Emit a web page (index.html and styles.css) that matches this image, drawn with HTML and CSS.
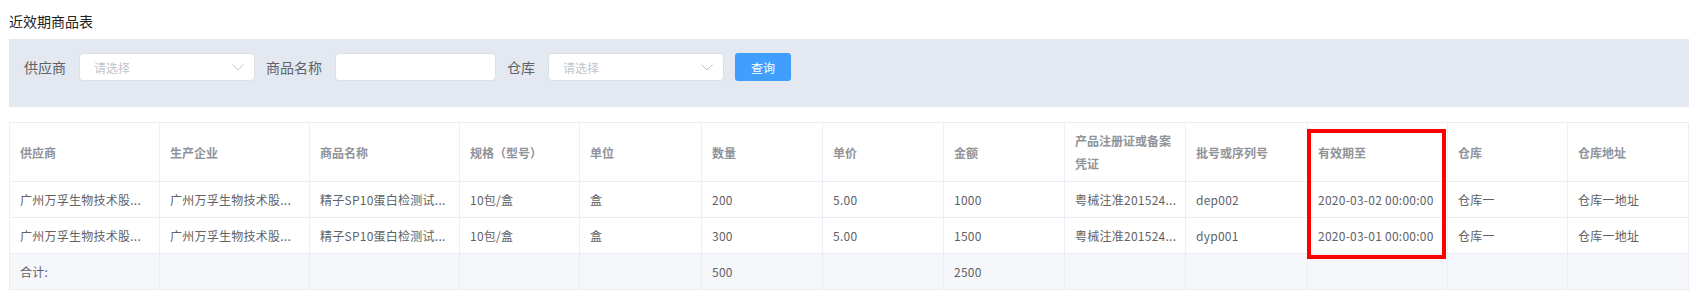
FILE: index.html
```html
<!DOCTYPE html>
<html lang="zh-CN">
<head>
<meta charset="utf-8">
<title>近效期商品表</title>
<link rel="stylesheet" href="styles.css">
</head>
<body>
<div class="page">
  <div class="title">近效期商品表</div>

  <form class="filter">
    <div class="form-item">
      <label class="form-label">供应商</label>
      <div class="select">
        <span class="placeholder">请选择</span>
        <svg class="arrow" width="12" height="7" viewBox="0 0 12 7"><polyline points="0.5,0.5 6,6 11.5,0.5" fill="none" stroke="#c0c4cc" stroke-width="1"/></svg>
      </div>
    </div>
    <div class="form-item">
      <label class="form-label">商品名称</label>
      <div class="input"></div>
    </div>
    <div class="form-item">
      <label class="form-label">仓库</label>
      <div class="select">
        <span class="placeholder">请选择</span>
        <svg class="arrow" width="12" height="7" viewBox="0 0 12 7"><polyline points="0.5,0.5 6,6 11.5,0.5" fill="none" stroke="#c0c4cc" stroke-width="1"/></svg>
      </div>
    </div>
    <button type="button" class="btn-primary">查询</button>
  </form>

  <div class="table-wrap">
    <table class="grid">
      <colgroup>
        <col class="w150"><col class="w150"><col class="w150"><col class="w120">
        <col class="w122"><col class="w121"><col class="w121"><col class="w121">
        <col class="w121"><col class="w122"><col class="w140"><col class="w120"><col class="w121">
      </colgroup>
      <thead>
        <tr>
          <th>供应商</th><th>生产企业</th><th>商品名称</th><th>规格（型号）</th><th>单位</th>
          <th>数量</th><th>单价</th><th>金额</th><th class="wrap">产品注册证或备案凭证</th>
          <th>批号或序列号</th><th>有效期至</th><th>仓库</th><th>仓库地址</th>
        </tr>
      </thead>
      <tbody>
        <tr>
          <td>广州万孚生物技术股...</td><td>广州万孚生物技术股...</td><td>精子SP10蛋白检测试...</td><td>10包/盒</td><td>盒</td>
          <td>200</td><td>5.00</td><td>1000</td><td>粤械注准201524...</td>
          <td>dep002</td><td>2020-03-02 00:00:00</td><td>仓库一</td><td>仓库一地址</td>
        </tr>
        <tr>
          <td>广州万孚生物技术股...</td><td>广州万孚生物技术股...</td><td>精子SP10蛋白检测试...</td><td>10包/盒</td><td>盒</td>
          <td>300</td><td>5.00</td><td>1500</td><td>粤械注准201524...</td>
          <td>dyp001</td><td>2020-03-01 00:00:00</td><td>仓库一</td><td>仓库一地址</td>
        </tr>
      </tbody>
      <tfoot>
        <tr>
          <td>合计:</td><td></td><td></td><td></td><td></td>
          <td>500</td><td></td><td>2500</td><td></td>
          <td></td><td></td><td></td><td></td>
        </tr>
      </tfoot>
    </table>
    <div class="highlight"></div>
  </div>
</div>
</body>
</html>
```

FILE: styles.css
```css
* { box-sizing: border-box; }

body {
  margin: 0;
  background: #fff;
  font-family: "Noto Sans CJK SC", "Noto Sans", sans-serif;
  color: #606266;
}

.page {
  padding: 0 3px 0 9px;
}

.title {
  padding-top: 11px;
  height: 39px;
  font-size: 14px;
  line-height: 20px;
  color: #222;
}

.filter {
  display: flex;
  align-items: center;
  gap: 11px;
  height: 68px;
  padding: 0 15px 12px;
  margin: 0;
  background: #e3e8f1;
}

.form-item {
  display: flex;
  align-items: center;
  gap: 13px;
}

.form-label {
  font-size: 14px;
  line-height: 28px;
  color: #606266;
}

.select,
.input {
  height: 28px;
  background: #fff;
  border: 1px solid #dcdfe6;
  border-radius: 4px;
}

.select {
  width: 176px;
  display: flex;
  align-items: center;
  justify-content: space-between;
  padding: 0 10px 0 14px;
}

.input { width: 161px; }

.placeholder {
  font-size: 12px;
  color: #c0c4cc;
}

.arrow { display: block; }

.btn-primary {
  width: 56px;
  height: 28px;
  padding: 0;
  border: 0;
  border-radius: 3px;
  background: #409eff;
  color: #fff;
  font-family: inherit;
  font-size: 12px;
}

.table-wrap {
  position: relative;
  margin-top: 15px;
}

.grid {
  width: 1680px;
  table-layout: fixed;
  border-collapse: separate;
  border-spacing: 0;
  border-top: 1px solid #ebeef5;
  border-left: 1px solid #ebeef5;
  font-size: 12px;
}

.w120 { width: 120px; }
.w121 { width: 121px; }
.w122 { width: 122px; }
.w140 { width: 140px; }
.w150 { width: 150px; }

.grid th,
.grid td {
  padding: 6px 10px;
  line-height: 23px;
  text-align: left;
  vertical-align: middle;
  white-space: nowrap;
  overflow: hidden;
  border-right: 1px solid #ebeef5;
  border-bottom: 1px solid #ebeef5;
}

.grid th {
  font-weight: bold;
  color: #909399;
}

.grid th.wrap { white-space: normal; }

.grid td {
  color: #606266;
  letter-spacing: 0.25px;
}

.grid tfoot td { background: #f5f7fa; }

.highlight {
  position: absolute;
  left: 1298px;
  top: 7px;
  width: 139px;
  height: 130px;
  border: 4px solid #ff0000;
  pointer-events: none;
}
```
